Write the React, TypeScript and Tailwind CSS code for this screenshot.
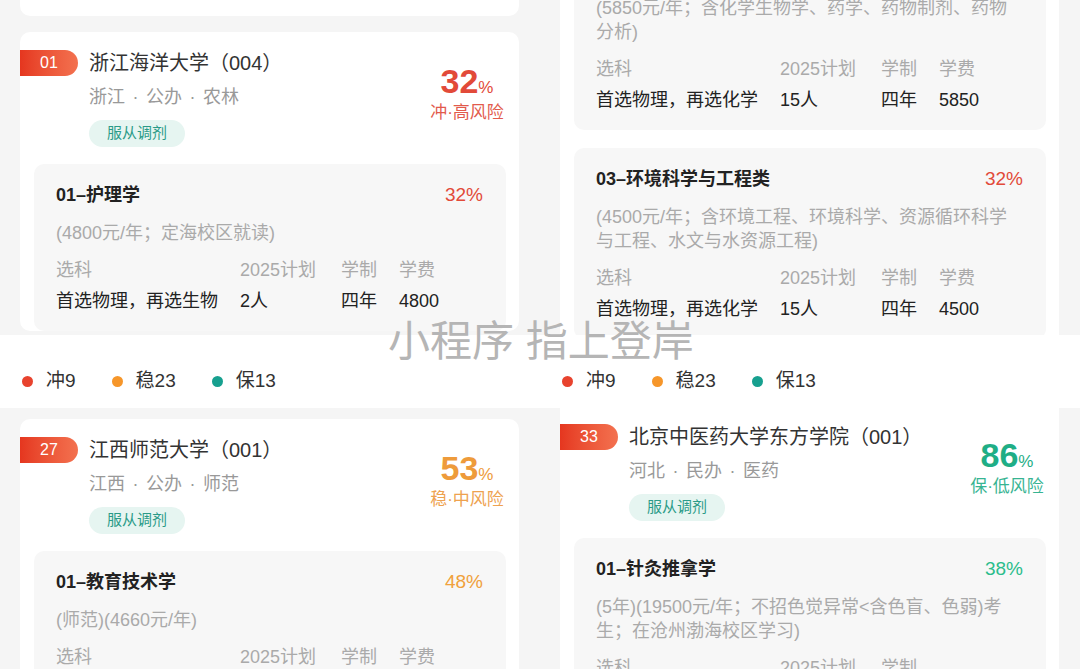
import React from 'react'

type Tone = 'red' | 'orange' | 'green'

const tones: Record<Tone, { big: string; risk: string; pct: string }> = {
  red: { big: 'text-[#e24a39]', risk: 'text-[#e25a4c]', pct: 'text-[#e24a39]' },
  orange: { big: 'text-[#ee9b3b]', risk: 'text-[#eea24f]', pct: 'text-[#f0a13c]' },
  green: { big: 'text-[#1fae86]', risk: 'text-[#37b492]', pct: 'text-[#2bbd8c]' },
}

function Legend() {
  const items = [
    { dot: 'bg-[#e8432e]', text: '冲9' },
    { dot: 'bg-[#f6962a]', text: '稳23' },
    { dot: 'bg-[#17a08f]', text: '保13' },
  ]
  return (
    <div className="flex h-[73px] items-start gap-[36px] bg-white pl-[22px] pt-[33px]">
      {items.map((it) => (
        <div key={it.text} className="flex items-center gap-[13px]">
          <span className={`h-[11px] w-[11px] rounded-full ${it.dot}`} />
          <span className="text-[19px] leading-[26px] text-[#333]">{it.text}</span>
        </div>
      ))}
    </div>
  )
}

function SchoolHeader({
  no,
  name,
  meta,
  pct,
  risk,
  tone,
}: {
  no: string
  name: string
  meta: string[]
  pct: string
  risk: string
  tone: Tone
}) {
  const t = tones[tone]
  return (
    <div className="flex items-start">
      <div className="mt-px flex h-[26px] w-[58px] shrink-0 items-center justify-center rounded-r-full bg-linear-to-r from-[#e5361f] to-[#f3714f] text-[16px] text-white">
        {no}
      </div>
      <div className="ml-[11px] min-w-0 flex-1">
        <div className="text-[20px] leading-[28px] text-[#333]">{name}</div>
        <div className="mt-[7px] flex text-[18px] leading-[26px] text-[#999]">
          {meta.map((m, i) => (
            <React.Fragment key={m}>
              {i > 0 && <span className="w-[21px] text-center">·</span>}
              <span>{m}</span>
            </React.Fragment>
          ))}
        </div>
        <div className="mt-[10px] inline-flex h-[27px] items-center rounded-full bg-[#e6f5f1] px-[18px] text-[15px] text-[#2b9b88]">
          服从调剂
        </div>
      </div>
      <div className="mr-[7px] mt-[15px] flex w-[90px] shrink-0 flex-col items-center">
        <div className={`flex h-[40px] items-baseline leading-none ${t.big}`}>
          <span className="text-[34px] font-semibold">{pct}</span>
          <span className="text-[17px]">%</span>
        </div>
        <div className={`mt-[-2px] text-[17px] leading-[22px] ${t.risk}`}>{risk}</div>
      </div>
    </div>
  )
}

function Major({
  title,
  pct,
  tone = 'red',
  desc,
  labels,
  values,
}: {
  title?: string
  pct?: string
  tone?: Tone
  desc: React.ReactNode
  labels: string[]
  values?: string[]
}) {
  return (
    <div className="rounded-[10px] bg-[#f7f7f7] pb-[17px] pl-[22px] pr-[23px] pt-[18px]">
      {title && (
        <div className="mb-[13px] flex items-center justify-between leading-[26px]">
          <span className="text-[18px] font-bold text-[#222]">{title}</span>
          <span className={`text-[19px] ${tones[tone].pct}`}>{pct}</span>
        </div>
      )}
      <div className="w-[417px] text-[18px] leading-[24px] text-[#aaa]">{desc}</div>
      <div className="mt-[12px] grid grid-cols-[184px_101px_58px_1fr] text-[18px] leading-[26px]">
        {labels.map((l) => (
          <span key={l} className="text-[#aaa]">
            {l}
          </span>
        ))}
        {values &&
          values.map((v) => (
            <span key={v} className="mt-[5px] text-[#222]">
              {v}
            </span>
          ))}
      </div>
    </div>
  )
}

const LABELS = ['选科', '2025计划', '学制', '学费']

export default function App() {
  return (
    <div className="relative grid h-[669px] w-[1080px] grid-cols-2 grid-rows-[335px_334px] overflow-hidden bg-[#f5f5f5] font-['Liberation_Sans','Noto_Sans_CJK_SC',sans-serif]">
      {/* top left */}
      <div className="overflow-hidden bg-[#f5f5f5] pl-[20px] pr-[21px]">
        <div className="h-[16px] rounded-b-[10px] bg-white" />
        <div className="mt-[16px] rounded-[10px] bg-white pt-[17px]">
          <SchoolHeader no="01" name="浙江海洋大学（004）" meta={['浙江', '公办', '农林']} pct="32" risk="冲·高风险" tone="red" />
          <div className="ml-[14px] mr-[13px] mt-[17px]">
            <Major
              title="01–护理学"
              pct="32%"
              tone="red"
              desc="(4800元/年；定海校区就读)"
              labels={LABELS}
              values={['首选物理，再选生物', '2人', '四年', '4800']}
            />
          </div>
        </div>
      </div>

      {/* top right */}
      <div className="overflow-hidden bg-[#f5f5f5] pl-[20px] pr-[21px]">
        <div className="-mt-[22px] bg-white pb-[20px] pl-[14px] pr-[13px]">
          <Major
            desc="(5850元/年；含化学生物学、药学、药物制剂、药物分析)"
            labels={LABELS}
            values={['首选物理，再选化学', '15人', '四年', '5850']}
          />
          <div className="mt-[18px]">
            <Major
              title="03–环境科学与工程类"
              pct="32%"
              tone="red"
              desc="(4500元/年；含环境工程、环境科学、资源循环科学与工程、水文与水资源工程)"
              labels={LABELS}
              values={['首选物理，再选化学', '15人', '四年', '4500']}
            />
          </div>
        </div>
      </div>

      {/* bottom left */}
      <div className="overflow-hidden bg-[#f5f5f5]">
        <Legend />
        <div className="pl-[20px] pr-[21px] pt-[11px]">
          <div className="rounded-[10px] bg-white pt-[17px]">
            <SchoolHeader no="27" name="江西师范大学（001）" meta={['江西', '公办', '师范']} pct="53" risk="稳·中风险" tone="orange" />
            <div className="ml-[14px] mr-[13px] mt-[17px]">
              <Major title="01–教育技术学" pct="48%" tone="orange" desc="(师范)(4660元/年)" labels={LABELS} />
            </div>
          </div>
        </div>
      </div>

      {/* bottom right */}
      <div className="overflow-hidden bg-[#f5f5f5]">
        <Legend />
        <div className="pl-[20px] pr-[21px]">
          <div className="rounded-b-[10px] bg-white pt-[15px]">
            <SchoolHeader no="33" name="北京中医药大学东方学院（001）" meta={['河北', '民办', '医药']} pct="86" risk="保·低风险" tone="green" />
            <div className="ml-[14px] mr-[13px] mt-[17px]">
              <Major
                title="01–针灸推拿学"
                pct="38%"
                tone="green"
                desc="(5年)(19500元/年；不招色觉异常<含色盲、色弱)考生；在沧州渤海校区学习)"
                labels={['选科', '2025计划', '学制']}
              />
            </div>
          </div>
        </div>
      </div>

      {/* watermark */}
      <div className="pointer-events-none absolute left-[388px] top-[321px] whitespace-nowrap text-[42px] leading-[42px] text-[#b5b5b5]">
        小程序 指上登岸
      </div>
    </div>
  )
}
